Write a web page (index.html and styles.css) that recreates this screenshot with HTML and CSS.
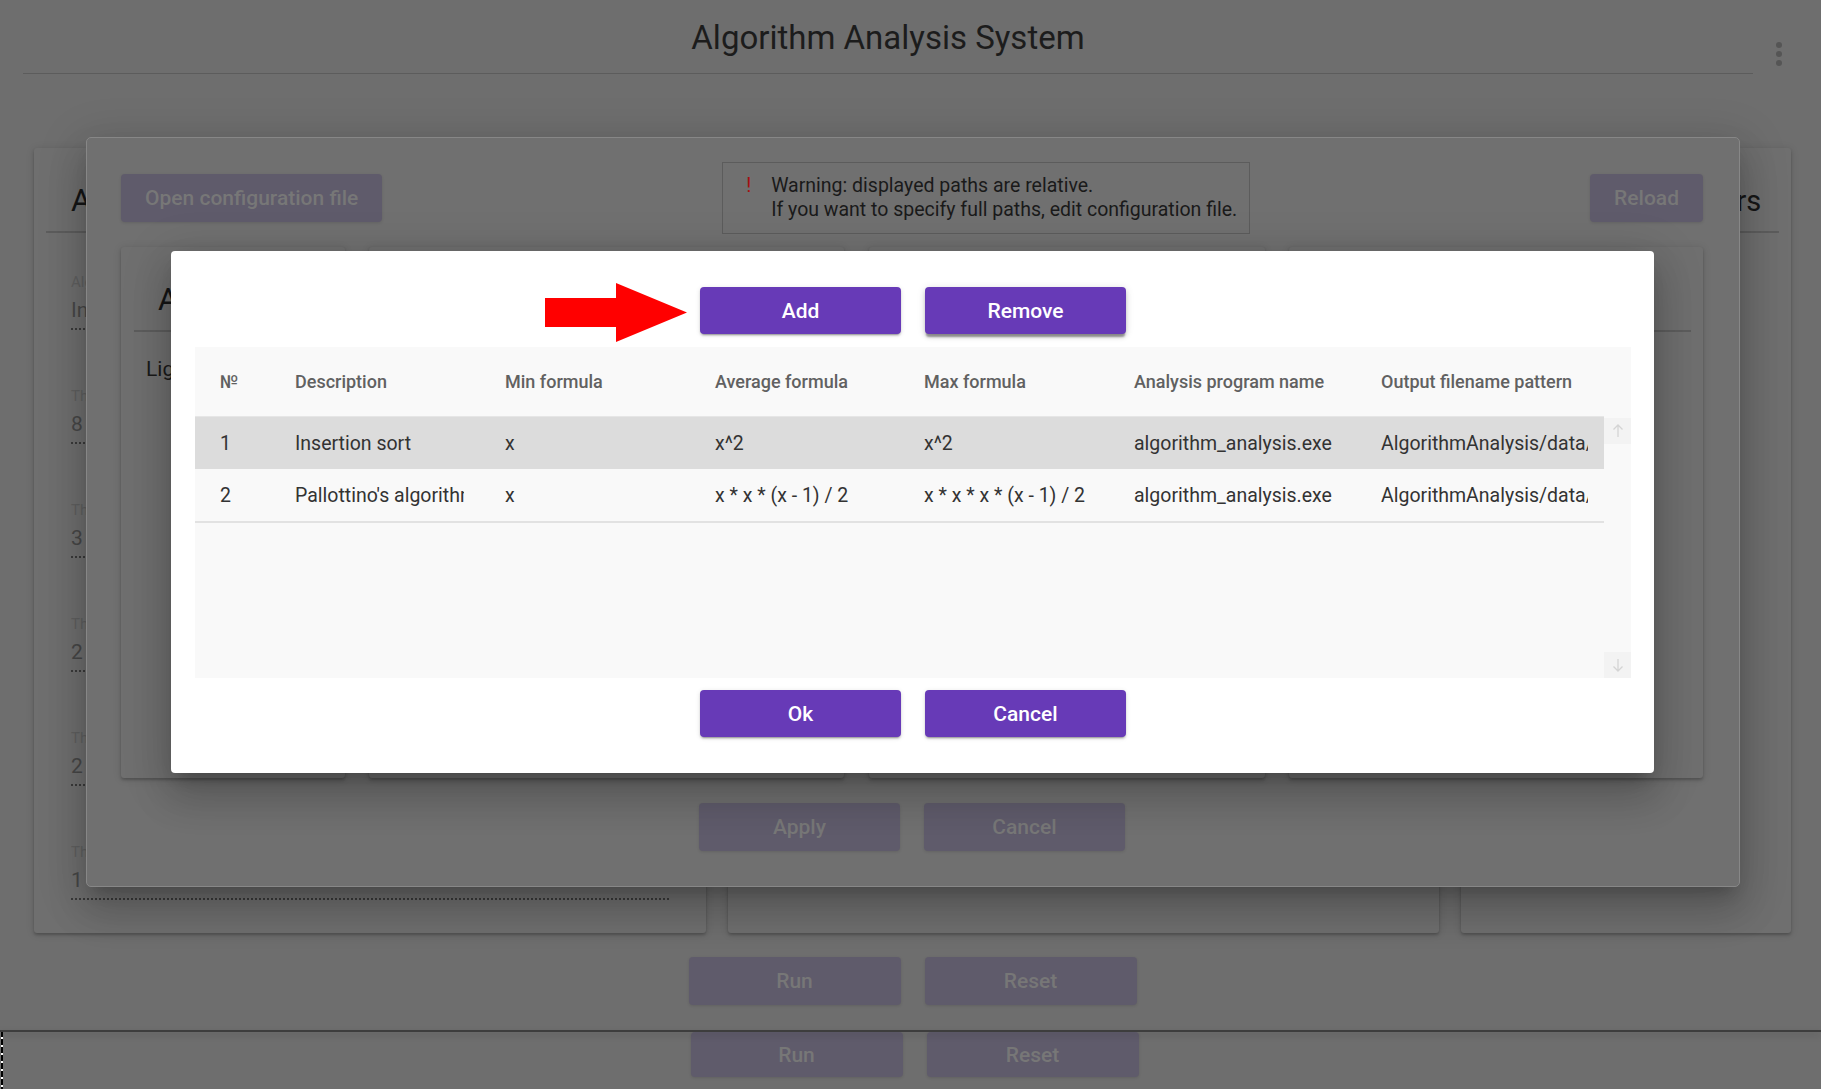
FILE: index.html
```html
<!DOCTYPE html>
<html lang="en">
<head>
<meta charset="utf-8">
<title>Algorithm Analysis System</title>
<link rel="stylesheet" href="styles.css">
</head>
<body>
<div class="page">
  <header class="topbar">
    <div class="topbar-main"><h1 class="app-title">Algorithm Analysis System</h1></div>
    <div class="kebab"><span class="dot"></span><span class="dot"></span><span class="dot"></span></div>
  </header>

  <main class="cards">
    <section class="card">
      <h2 class="card-title">Algorithm settings</h2>
      <div class="fields">
        <div class="field"><div class="field-label">Algorithm</div><div class="field-value">Insertion sort</div></div>
        <div class="field"><div class="field-label">The number of vertices</div><div class="field-value">8</div></div>
        <div class="field"><div class="field-label">The minimum size</div><div class="field-value">3</div></div>
        <div class="field"><div class="field-label">The step</div><div class="field-value">2</div></div>
        <div class="field"><div class="field-label">The count of steps</div><div class="field-value">2</div></div>
        <div class="field"><div class="field-label">The repeats</div><div class="field-value">1</div></div>
      </div>
    </section>
    <section class="card">
      <h2 class="card-title">Results</h2>
    </section>
    <section class="card">
      <h2 class="card-title card-title-sm">Analysis parameters</h2>
    </section>
  </main>

  <div class="run-row">
    <button class="btn-dim btn-run">Run</button>
    <button class="btn-dim btn-run">Reset</button>
  </div>
  <div class="split"></div>
  <div class="run-row run-row-2">
    <button class="btn-dim btn-run btn-short">Run</button>
    <button class="btn-dim btn-run btn-short">Reset</button>
  </div>
  <div class="dash"></div>

  <section class="cfg-dialog">
    <div class="cfg-top">
      <button class="btn-dim btn-open">Open configuration file</button>
      <div class="warning">
        <span class="warn-mark">!</span>
        <div class="warn-text">Warning: displayed paths are relative.<br>If you want to specify full paths, edit configuration file.</div>
      </div>
      <button class="btn-dim btn-open">Reload</button>
    </div>
    <div class="cfg-cards">
      <div class="card inner"><h3 class="card-title">Algorithms</h3><div class="inner-text">Lightweight graphs</div></div>
      <div class="card inner"><h3 class="card-title">Analysis</h3></div>
      <div class="card inner"><h3 class="card-title">Output</h3></div>
      <div class="card inner"><h3 class="card-title">Paths</h3></div>
    </div>
    <div class="cfg-actions">
      <button class="btn-dim btn-cfg">Apply</button>
      <button class="btn-dim btn-cfg">Cancel</button>
    </div>
  </section>

  <section class="edit-dialog">
    <div class="ed-top">
      <svg class="pointer" width="142" height="59" viewBox="0 0 142 59"><polygon points="0,15 71,15 71,0 142,29.5 71,59 71,44 0,44" fill="#ff0000"/></svg>
      <button class="btn-primary">Add</button>
      <button class="btn-primary focused">Remove</button>
    </div>
    <div class="table">
      <div class="tbl-main">
        <div class="tr th">
          <div class="td">№</div>
          <div class="td">Description</div>
          <div class="td">Min formula</div>
          <div class="td">Average formula</div>
          <div class="td">Max formula</div>
          <div class="td">Analysis program name</div>
          <div class="td">Output filename pattern</div>
        </div>
        <div class="tr sel">
          <div class="td">1</div>
          <div class="td">Insertion sort</div>
          <div class="td">x</div>
          <div class="td">x^2</div>
          <div class="td">x^2</div>
          <div class="td">algorithm_analysis.exe</div>
          <div class="td">AlgorithmAnalysis/data/insertion_sort.txt</div>
        </div>
        <div class="tr last">
          <div class="td">2</div>
          <div class="td">Pallottino's algorithm</div>
          <div class="td">x</div>
          <div class="td">x * x * (x - 1) / 2</div>
          <div class="td">x * x * x * (x - 1) / 2</div>
          <div class="td">algorithm_analysis.exe</div>
          <div class="td">AlgorithmAnalysis/data/pallottino.txt</div>
        </div>
      </div>
      <div class="tbl-scroll">
        <div class="sbtn"><svg width="12" height="14" viewBox="0 0 12 14"><path d="M6 13V1M1.5 5.5L6 1l4.5 4.5" fill="none" stroke="#d4d4d4" stroke-width="1.3"/></svg></div>
        <div class="sbtn"><svg width="12" height="14" viewBox="0 0 12 14"><path d="M6 1v12M1.5 8.5L6 13l4.5-4.5" fill="none" stroke="#d4d4d4" stroke-width="1.3"/></svg></div>
      </div>
    </div>
    <div class="ed-actions">
      <button class="btn-primary">Ok</button>
      <button class="btn-primary">Cancel</button>
    </div>
  </section>
</div>
</body>
</html>
```
FILE: styles.css
```css
* { box-sizing: border-box; }
html, body { margin: 0; padding: 0; }
body {
  background: #6e6e6e;
  font-family: Roboto, "Liberation Sans", Arial, sans-serif;
  overflow: hidden;
}
button { font-family: inherit; border: 0; margin: 0; padding: 0; cursor: default; }
h1, h2, h3 { margin: 0; font-weight: 400; }

.page {
  position: relative;
  width: 1821px;
  height: 1089px;
  overflow: hidden;
  background: #6e6e6e;
}

/* top bar */
.topbar { display: flex; height: 74px; }
.topbar-main {
  flex: 1;
  margin-left: 23px;
  height: 74px;
  border-bottom: 1px solid #5c5c5c;
  display: flex;
  align-items: center;
  justify-content: center;
  padding-top: 2px;
}
.app-title { font-size: 33px; color: #1c1c1c; line-height: 40px; }
.kebab {
  width: 68px;
  display: flex;
  flex-direction: column;
  padding: 42px 0 0 23px;
  gap: 3px;
}
.dot { width: 6px; height: 6px; border-radius: 50%; background: #555555; }

/* cards */
.cards {
  display: grid;
  grid-template-columns: 672px 711px 330px;
  column-gap: 22px;
  margin-top: 74px;
  padding-left: 34px;
  height: 785px;
}
.card {
  background: #6f6f6f;
  border-radius: 3px;
  padding: 0 12px;
  box-shadow: 0 2px 3px rgba(0,0,0,0.22), 0 1px 8px rgba(0,0,0,0.12);
  overflow: hidden;
}
.card-title {
  font-size: 31px;
  line-height: 40px;
  color: #161616;
  padding: 33px 0 10px 25px;
  border-bottom: 2px solid #5d5d5d;
  white-space: nowrap;
}
.card-title-sm { font-size: 29px; }
.fields { padding: 41px 25px 0; }
.field { margin-bottom: 58px; }
.field-label { font-size: 15px; line-height: 16px; color: #606060; white-space: nowrap; }
.field-value {
  font-size: 21px;
  line-height: 24px;
  color: #474747;
  margin-top: 8px;
  padding-bottom: 6px;
  border-bottom: 2px dotted #3a3a3a;
}

/* bottom run rows */
.run-row {
  display: flex;
  justify-content: center;
  gap: 24px;
  margin-top: 24px;
  padding-left: 4px;
}
.btn-dim {
  background: #5f5b6b;
  color: #777777;
  font-size: 21px;
  font-weight: 500;
  border-radius: 4px;
  height: 48px;
  box-shadow: 0 1px 3px rgba(0,0,0,0.12);
}
.btn-run { width: 212px; }
.split {
  margin-top: 25px;
  height: 2px;
  background: #3d3d3d;
  box-shadow: 0 3px 7px rgba(0,0,0,0.22);
  position: relative;
  z-index: 1;
}
.run-row-2 { margin-top: 0; padding-left: 8px; }
.btn-short { height: 45px; }
.dash {
  position: absolute;
  left: 1px;
  top: 1031px;
  width: 2px;
  height: 58px;
  background: repeating-linear-gradient(to bottom, #000 0 6px, #fff 6px 8px);
}

/* configuration dialog (behind) */
.cfg-dialog {
  position: absolute;
  left: 86px;
  top: 137px;
  width: 1654px;
  height: 750px;
  background: #707070;
  border: 1px solid #878787;
  border-radius: 5px;
  padding: 24px 36px 35px 34px;
  box-shadow: 0 11px 15px -7px rgba(0,0,0,0.2), 0 24px 38px 3px rgba(0,0,0,0.14), 0 9px 46px 8px rgba(0,0,0,0.12);
}
.cfg-top {
  display: flex;
  justify-content: space-between;
  align-items: center;
  height: 72px;
}
.btn-open { padding: 0 24px; white-space: nowrap; }
.warning {
  display: flex;
  border: 1px solid #5c5c5c;
  padding: 11px 12px 11px 23px;
  height: 72px;
  color: #1a1a1a;
  font-size: 19.5px;
  line-height: 24px;
}
.warn-mark { width: 25px; color: #a50f0f; }
.warn-text { white-space: nowrap; }
.cfg-cards {
  display: grid;
  grid-template-columns: 224px 475px 396px 414px;
  justify-content: space-between;
  margin-top: 13px;
  height: 531px;
}
.inner { padding: 0 12px 0 13px; }
.inner .card-title { padding-left: 24px; }
.inner-text { font-size: 21px; line-height: 24px; color: #1a1a1a; margin: 25px 0 0 12px; white-space: nowrap; }
.cfg-actions {
  display: flex;
  justify-content: center;
  gap: 24px;
  margin-top: 25px;
}
.btn-cfg { width: 201px; }

/* edit dialog (front) */
.edit-dialog {
  position: absolute;
  left: 171px;
  top: 251px;
  width: 1483px;
  height: 522px;
  background: #ffffff;
  border-radius: 4px;
  padding: 36px 23px 36px 24px;
  box-shadow: 0 11px 15px -7px rgba(0,0,0,0.2), 0 24px 38px 3px rgba(0,0,0,0.14), 0 9px 46px 8px rgba(0,0,0,0.12);
}
.ed-top, .ed-actions {
  position: relative;
  display: flex;
  justify-content: center;
  gap: 24px;
  height: 47px;
}
.ed-actions { margin-top: 12px; }
.pointer { position: absolute; left: 350px; top: -4px; }
.btn-primary {
  width: 201px;
  height: 47px;
  background: #673ab7;
  color: #ffffff;
  font-size: 21px;
  font-weight: 500;
  border-radius: 4px;
  box-shadow: 0 3px 1px -2px rgba(0,0,0,0.2), 0 2px 2px 0 rgba(0,0,0,0.14), 0 1px 5px 0 rgba(0,0,0,0.12);
}
.btn-primary.focused {
  box-shadow: 0 4px 2px -1px rgba(0,0,0,0.35), 0 3px 5px 0 rgba(0,0,0,0.14), 0 1px 8px 0 rgba(0,0,0,0.12);
}

.table {
  display: flex;
  margin-top: 13px;
  height: 331px;
  background: #f9f9f9;
}
.tbl-main { width: 1409px; flex: none; }
.tr {
  display: grid;
  grid-template-columns: 75px 210px 210px 210px 210px 247px 247px;
  align-items: center;
  height: 52px;
  font-size: 19.5px;
  color: #333333;
}
.td {
  padding: 0 0 0 24px;
  margin-right: 16px;
  white-space: nowrap;
  overflow: hidden;
}
.tr .td:first-child { padding-left: 25px; }
.tr .td:nth-child(2), .tr .td:nth-child(3), .tr .td:nth-child(4) { padding-left: 25px; }
.th {
  height: 70px;
  font-size: 18px;
  font-weight: 500;
  color: #616161;
  border-bottom: 1px solid #e6e6e6;
}
.sel { background: #dcdcdc; }
.last { height: 54px; border-bottom: 2px solid #e2e2e2; }
.tbl-scroll {
  flex: 1;
  display: flex;
  flex-direction: column;
  justify-content: space-between;
  padding-top: 71px;
}
.sbtn {
  height: 26px;
  background: #f3f3f3;
  display: flex;
  align-items: center;
  justify-content: center;
}
```
